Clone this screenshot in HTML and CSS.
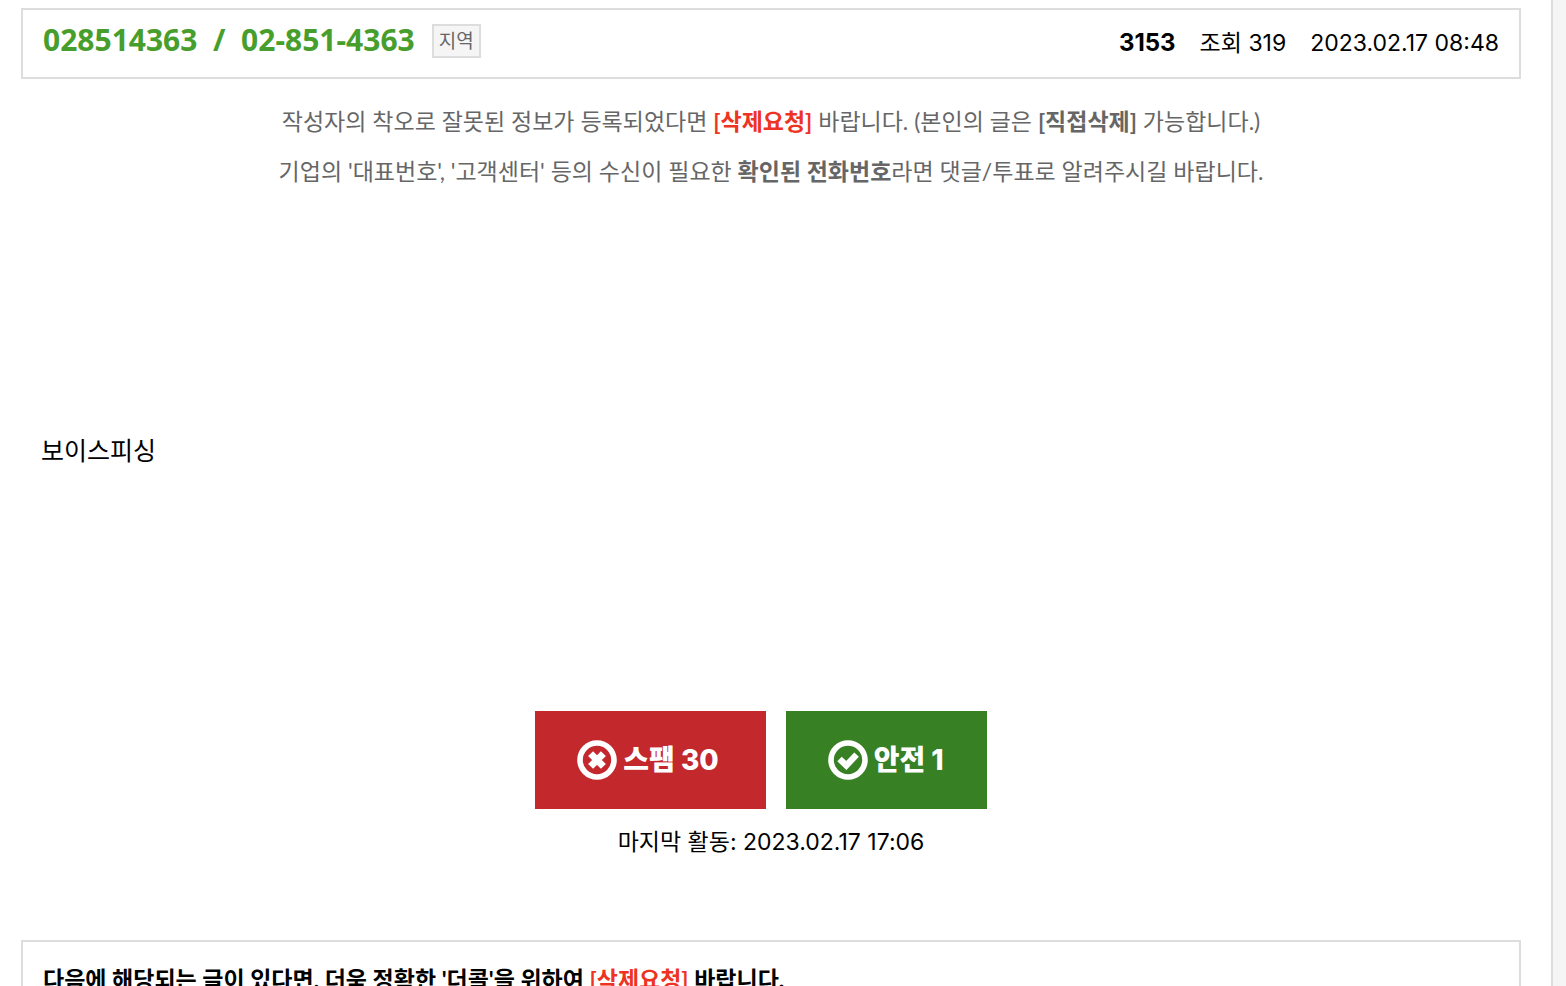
FILE: index.html
```
<!DOCTYPE html>
<html lang="ko">
<head>
<meta charset="utf-8">
<meta name="viewport" content="width=device-width, initial-scale=1">
<title>028514363 / 02-851-4363</title>
<link rel="stylesheet" href="styles.css">
</head>
<body>
<main class="panel">
  <header class="post-head">
    <h1 class="phone">028514363&nbsp; /&nbsp; 02-851-4363</h1>
    <span class="tag">지역</span>
    <div class="meta">
      <strong>3153</strong>
      <span>조회 319</span>
      <time datetime="2023-02-17T08:48">2023.02.17 08:48</time>
    </div>
  </header>
  <div class="notice">
    <p>작성자의 착오로 잘못된 정보가 등록되었다면 <a class="request" href="#">[삭제요청]</a> 바랍니다. (본인의 글은 <b>[직접삭제]</b> 가능합니다.)</p>
    <p>기업의 '대표번호', '고객센터' 등의 수신이 필요한 <b>확인된 전화번호</b>라면 댓글/투표로 알려주시길 바랍니다.</p>
  </div>
  <article class="body-text">보이스피싱</article>
  <div class="votes">
    <button class="vote spam" type="button">
      <svg class="icon" viewBox="0 0 40 40" aria-hidden="true"><circle cx="20" cy="20" r="17" fill="none" stroke="#fff" stroke-width="5.6"/><path d="M13.6 13.6 26.4 26.4M26.4 13.6 13.6 26.4" fill="none" stroke="#fff" stroke-width="7"/></svg>
      <span>스팸 30</span>
    </button>
    <button class="vote safe" type="button">
      <svg class="icon" viewBox="0 0 40 40" aria-hidden="true"><circle cx="20" cy="20" r="17" fill="none" stroke="#fff" stroke-width="5.6"/><path d="M11.5 19 18.3 25.4 28.6 14.6" fill="none" stroke="#fff" stroke-width="6.4"/></svg>
      <span>안전 1</span>
    </button>
  </div>
  <p class="activity">마지막 활동: 2023.02.17 17:06</p>
  <section class="guide">
    <p>다음에 해당되는 글이 있다면, 더욱 정확한 '더콜'을 위하여 <a class="request" href="#">[삭제요청]</a> 바랍니다.</p>
  </section>
</main>
</body>
</html>
```
FILE: styles.css
```
* { box-sizing: border-box; }

body {
  margin: 0;
  height: 100vh;
  overflow: hidden;
  background: #f5f5f5;
  color: #000;
  font-family: Inter, "Noto Sans CJK KR", sans-serif;
  font-size: 23px;
  line-height: 30px;
}

h1, p { margin: 0; }
a { text-decoration: none; }

.panel {
  height: 100%;
  margin-right: 13px;
  padding: 8px 30px 0 21px;
  border-right: 2px solid #ddd;
  background: #fff;
  overflow: hidden;
}

.post-head {
  display: flex;
  align-items: flex-start;
  padding: 14px 20px 19px;
  border: 2px solid #ddd;
}

.phone {
  color: #479e2c;
  font: 700 30px/32px "Noto Sans", sans-serif;
}

.tag {
  margin-left: 17px;
  padding: 1px 5px 0;
  border: 2px solid #ddd;
  background: #f5f5f5;
  color: #666;
  font-size: 19px;
  line-height: 29px;
}

.meta {
  display: flex;
  gap: 24px;
  margin-left: auto;
  padding-top: 4px;
}

.meta strong { font-size: 24px; }

.notice {
  padding-top: 17px;
  color: #666;
  font-family: Lato, "Noto Sans CJK KR", sans-serif;
  line-height: 50px;
  text-align: center;
}

.request {
  color: #ee3323;
  font-weight: 700;
}

.body-text {
  min-height: 295px;
  margin-top: 240px;
  padding-left: 20px;
  font-size: 25px;
}

.votes {
  display: flex;
  justify-content: center;
  gap: 20px;
  margin-top: -20px;
  padding-right: 20px;
}

.vote {
  display: flex;
  align-items: center;
  gap: 6px;
  height: 98px;
  padding: 0 43px 0 42px;
  border: 0;
  color: #fff;
  font: 800 28px/40px Inter, "Noto Sans CJK KR", sans-serif;
  cursor: pointer;
}

.spam {
  padding-right: 47px;
  background: #c3282d;
}

.safe { background: #388024; }
.icon { width: 40px; height: 40px; }

.activity {
  margin-top: 18px;
  text-align: center;
}

.guide {
  margin-top: 83px;
  padding: 17px 20px;
  border: 2px solid #ddd;
  font-family: Lato, "Noto Sans CJK KR", sans-serif;
  font-weight: 700;
  line-height: 40px;
}
```
